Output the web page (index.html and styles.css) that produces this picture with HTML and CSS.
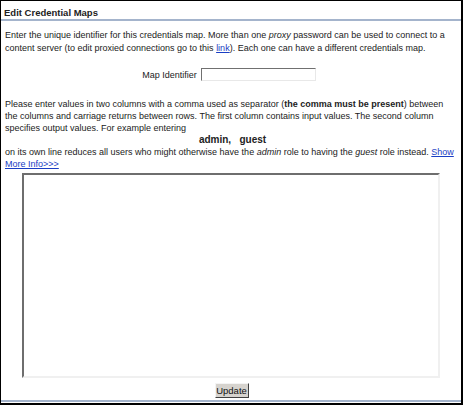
FILE: index.html
```html
<!DOCTYPE html>
<html>
<head>
<meta charset="utf-8">
<link rel="stylesheet" href="styles.css">
</head>
<body>
<div class="page">
  <div class="title">Edit Credential Maps</div>
  <p class="intro">Enter the unique identifier for this credentials map. More than one <i>proxy</i> password can be used to connect to a<br>content server (to edit proxied connections go to this <a href="#">link</a>). Each one can have a different credentials map.</p>
  <div class="idrow">
    <label class="idlabel">Map Identifier</label>
    <input class="idinput" type="text">
  </div>
  <p class="help">Please enter values in two columns with a comma used as separator (<b>the comma must be present</b>) between<br>the columns and carriage returns between rows. The first column contains input values. The second column<br>specifies output values. For example entering</p>
  <div class="example">admin,&nbsp;&nbsp; guest</div>
  <p class="help2">on its own line reduces all users who might otherwise have the <i>admin</i> role to having the <i>guest</i> role instead. <a href="#">Show<br>More Info&gt;&gt;&gt;</a></p>
  <div class="arearow"><textarea class="map"></textarea></div>
  <div class="btnrow"><button class="update">Update</button></div>
  <div class="footer"></div>
</div>
</body>
</html>
```
FILE: styles.css
```css
html, body {
  margin: 0;
  padding: 0;
  background: #fff;
}
.page {
  box-sizing: border-box;
  width: 463px;
  height: 405px;
  border-left: 1px solid #000;
  border-top: 1px solid #000;
  border-right: 2px solid #000;
  border-bottom: 2px solid #000;
  font-family: "Liberation Sans", Arial, sans-serif;
  font-size: 9px;
  color: #222;
  display: flex;
  flex-direction: column;
}
.title {
  font-weight: bold;
  font-size: 9.5px;
  padding: 6px 0 0 3px;
  height: 12px;
  line-height: 12px;
  border-bottom: 2px solid #a4b4cc;
}
.intro {
  margin: 8px 4px 0 4px;
  line-height: 13px;
  white-space: nowrap;
}
a {
  color: #1a3ec4;
  text-decoration: underline;
}
.idrow {
  display: flex;
  justify-content: center;
  align-items: center;
  gap: 4px;
  margin-top: 13px;
  padding-right: 4px;
}
.idinput {
  box-sizing: border-box;
  width: 115px;
  height: 13px;
  margin: 0;
  padding: 0;
  border: 1px solid;
  border-color: #707070 #e8e8e8 #e8e8e8 #707070;
  background: #fff;
}
.help {
  margin: 17px 4px 0 4px;
  line-height: 12px;
  white-space: nowrap;
}
.example {
  font-weight: bold;
  text-align: center;
  font-size: 10px;
  line-height: 12px;
  padding-left: 3px;
}
.help2 {
  margin: 0 4px;
  line-height: 12px;
  white-space: nowrap;
}
.arearow {
  padding-left: 21px;
  margin-top: 3px;
}
.map {
  display: block;
  box-sizing: border-box;
  width: 418px;
  height: 205px;
  margin: 0;
  padding: 0;
  resize: none;
  border: 2px solid;
  border-color: #6e6e6e #f0f0f0 #f0f0f0 #6e6e6e;
  background: #fff;
}
.btnrow {
  display: flex;
  justify-content: center;
  margin-top: 5px;
  padding-left: 1px;
}
.update {
  box-sizing: border-box;
  width: 34px;
  height: 15px;
  padding: 0;
  margin: 0;
  font-family: "Liberation Sans", Arial, sans-serif;
  font-size: 9.5px;
  line-height: 11px;
  color: #111;
  background: #d6d3ce;
  border: 1px solid;
  border-color: #f4f4f4 #404040 #404040 #f4f4f4;
}
.footer {
  margin-top: auto;
  height: 2px;
  background: #a4b4cc;
  margin-bottom: 1px;
}
```
